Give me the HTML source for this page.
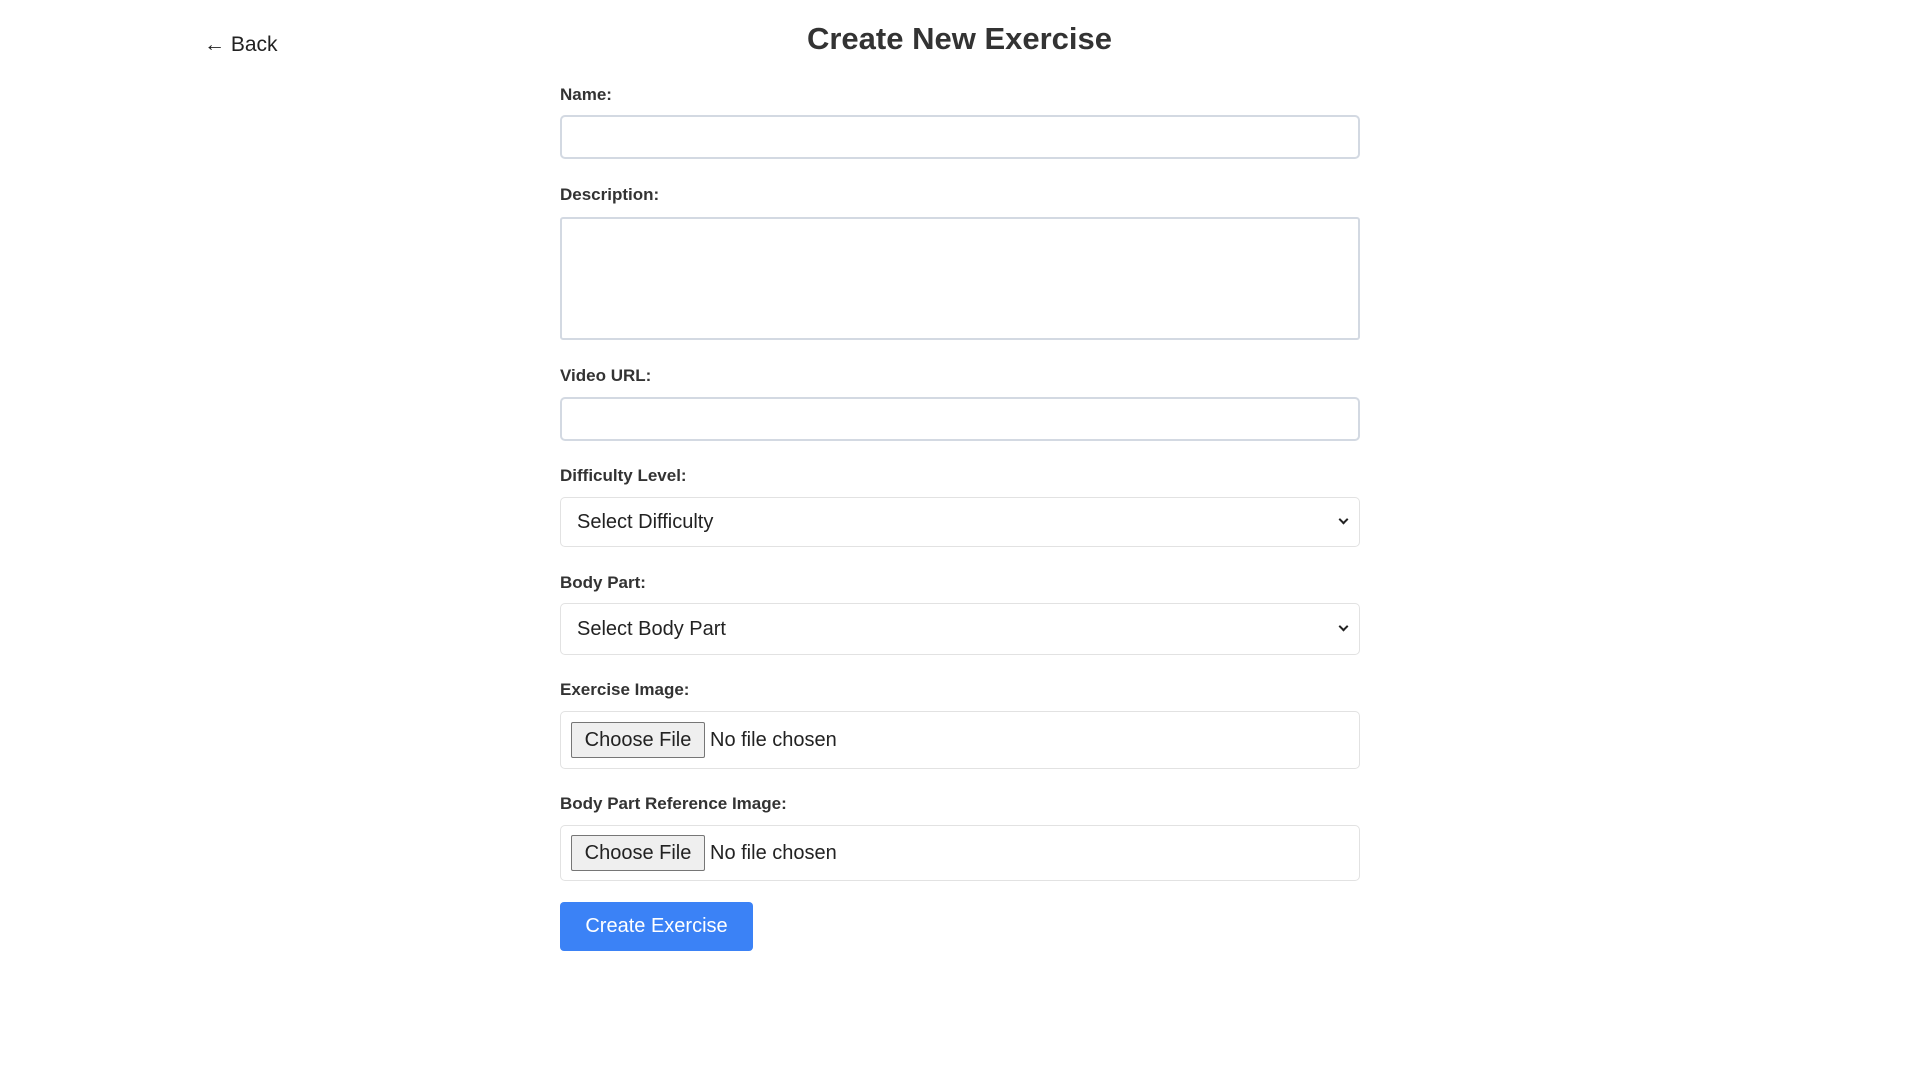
<!DOCTYPE html>
<html><head><meta charset="utf-8"><style>
*{box-sizing:border-box;margin:0;padding:0}
body{width:1919px;height:1079px;background:#fff;font-family:"Liberation Sans",sans-serif;color:#222;position:relative;overflow:hidden}
.a{position:absolute}
.back{left:204px;top:33px;font-size:21px;color:#222}
h1{position:absolute;left:0;width:1919px;text-align:center;top:21px;font-size:31px;font-weight:bold;color:#333}
.lbl{left:560px;font-size:17px;font-weight:bold;color:#333}
.box{left:560px;width:800px;border:1px solid #d3d9e2;border-radius:5px;background:#fff}
.sel{border-color:#e2e2e2;font-size:20px;padding-left:16px;display:flex;align-items:center;color:#222}
.chev{position:absolute;right:12px;top:50%;margin-top:-6px;width:7px;height:7px;border-right:2px solid #222;border-bottom:2px solid #222;transform:rotate(45deg)}
.fb{position:absolute;left:10px;background:#efefef;border:1px solid #767676;border-radius:2px;font-size:20px;padding:0 9px;width:134px;height:36px;line-height:34px;text-align:center}
.fn{position:absolute;left:149px;font-size:20px}
.btn{left:560px;top:902px;width:193px;height:49px;background:#3b82f6;color:#fff;border-radius:4px;font-size:20px;line-height:49px;text-align:center}
</style></head><body>
<div class="a back">← Back</div>
<h1>Create New Exercise</h1>
<div class="a lbl" style="top:85px">Name:</div>
<div class="a box" style="top:115px;height:44px;border-width:2px"></div>
<div class="a lbl" style="top:185px">Description:</div>
<div class="a box" style="top:217px;height:123px;border-width:2px;border-radius:3px"></div>
<div class="a lbl" style="top:366px">Video URL:</div>
<div class="a box" style="top:397px;height:44px;border-width:2px"></div>
<div class="a lbl" style="top:466px">Difficulty Level:</div>
<div class="a box sel" style="top:497px;height:50px">Select Difficulty<span class="chev"></span></div>
<div class="a lbl" style="top:573px">Body Part:</div>
<div class="a box sel" style="top:603px;height:52px">Select Body Part<span class="chev"></span></div>
<div class="a lbl" style="top:680px">Exercise Image:</div>
<div class="a box sel" style="top:711px;height:58px"><span class="fb" style="top:10px">Choose File</span><span class="fn" style="top:17px">No file chosen</span></div>
<div class="a lbl" style="top:794px">Body Part Reference Image:</div>
<div class="a box sel" style="top:825px;height:56px"><span class="fb" style="top:9px">Choose File</span><span class="fn" style="top:16px">No file chosen</span></div>
<div class="a btn">Create Exercise</div>
</body></html>
